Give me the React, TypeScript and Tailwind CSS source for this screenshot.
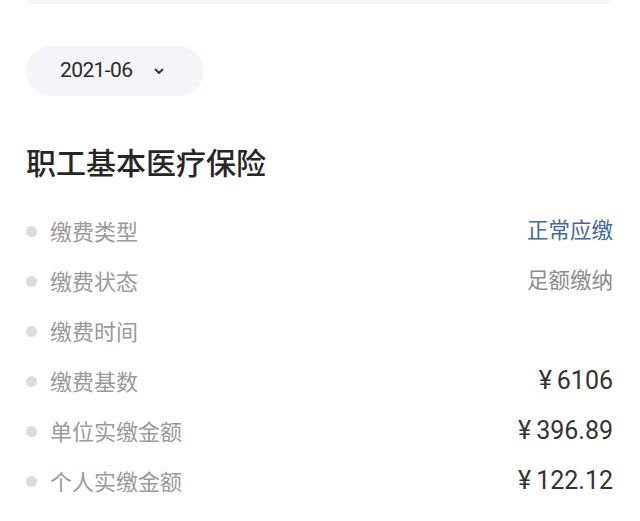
import React from "react";

const rows: { label: string; value: string; cls: string }[] = [
  { label: "缴费类型", value: "正常应缴", cls: "text-[#44689f] text-[21.5px]" },
  { label: "缴费状态", value: "足额缴纳", cls: "text-[#8c8c8c] text-[21.5px]" },
  { label: "缴费时间", value: "", cls: "" },
  { label: "缴费基数", value: "¥6106", cls: "text-[#333] text-[25px]" },
  { label: "单位实缴金额", value: "¥396.89", cls: "text-[#333] text-[25px]" },
  { label: "个人实缴金额", value: "¥122.12", cls: "text-[#333] text-[25px]" },
];

export default function App() {
  return (
    <div
      className="w-[640px] h-[521px] bg-white overflow-hidden"
      style={{ fontFamily: "Roboto, 'Noto Sans CJK SC', sans-serif" }}
    >
      <div className="mx-[28px] w-[582px] h-[4px] bg-[#f4f4f9] rounded-b-[4px]" />
      <div className="ml-[26px] mt-[42px] w-[178px] h-[50px] rounded-full bg-[#f4f5f8] flex items-center pl-[34px]">
        <span className="text-[21px] text-[#2a2a2a] tracking-[-0.6px]">2021-06</span>
        <svg className="ml-[22px]" width="10" height="7" viewBox="0 0 10 7">
          <path d="M1.5 1.5 L5 5 L8.5 1.5" fill="none" stroke="#333" strokeWidth="1.8" strokeLinecap="round" strokeLinejoin="round" />
        </svg>
      </div>
      <div className="ml-[26px] mt-[45px] h-[40px] flex items-center text-[30px] leading-none font-medium text-[#262626]" style={{ fontFamily: "'Noto Sans CJK SC', sans-serif" }}>
        职工基本医疗保险
      </div>
      <div className="mt-[25px] pl-[26px] pr-[27px]">
        {rows.map((r) => (
          <div key={r.label} className="h-[50px] flex items-center justify-between">
            <div className="flex items-center">
              <div className="w-[11px] h-[11px] rounded-full bg-[#dcdcdc]" />
              <span className="ml-[13px] text-[22px] leading-none pb-[3px] text-[#9a9a9a]" style={{ fontFamily: "'Noto Sans CJK SC', sans-serif" }}>
                {r.label}
              </span>
            </div>
            <span className={r.cls} style={{ fontFamily: "Roboto, 'Noto Sans CJK SC', sans-serif" }}>
              {r.value.startsWith("¥") ? (
                <>
                  <span className="mr-[5px]">¥</span>
                  {r.value.slice(1)}
                </>
              ) : (
                r.value
              )}
            </span>
          </div>
        ))}
      </div>
    </div>
  );
}
